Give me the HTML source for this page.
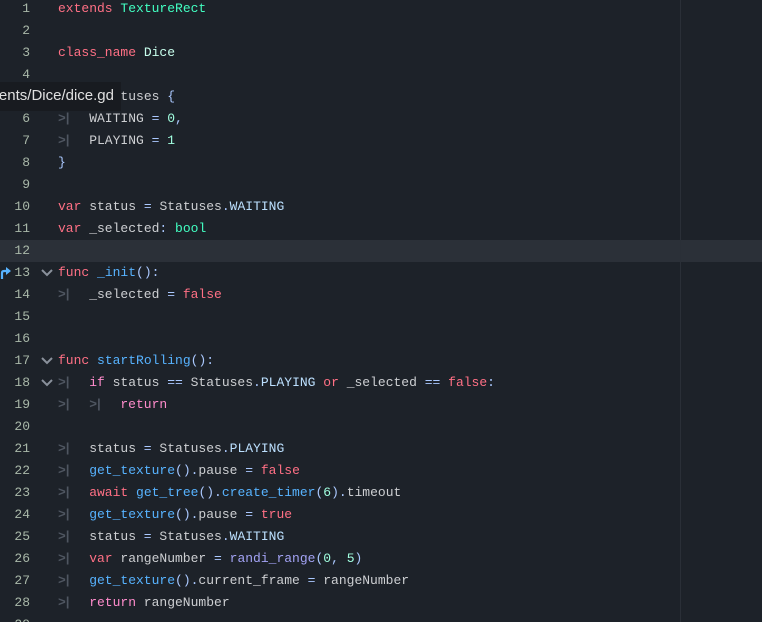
<!DOCTYPE html><html style="margin:0;height:622px;overflow:hidden"><head><style>
body{margin:0;width:762px;height:622px;background:#1d2229;overflow:hidden;position:relative;font-family:"Liberation Mono",monospace;font-size:13px}
.l{position:absolute;left:0;width:762px;height:22px;line-height:22px;white-space:pre;color:#cdcfd2}
.n{position:absolute;right:732px;color:#a9b8a9;text-align:right}
.c{position:absolute;left:58px}
.t{color:#4f5661;font-weight:bold;letter-spacing:-2px;display:inline-block;width:31.2px}
.k{color:#ff7085}.cf{color:#ff8ccc}.f{color:#57b3ff}.m{color:#bce0ff}.nu{color:#a1ffe0}.s{color:#abc9ff}.g{color:#a3a3f5}.ty{color:#42ffc2}.ut{color:#c7ffed}
.fold{position:absolute;left:41px;top:7px}
</style></head><body>
<div style="position:absolute;left:0;top:240px;width:762px;height:22px;background:#2b3038"></div>
<div style="position:absolute;left:680px;top:0;width:1px;height:622px;background:#2a2f37"></div>
<div class="l" style="top:-2px"><span class="n">1</span><span class="c"><span class="k">extends</span> <span class="ty">TextureRect</span></span></div>
<div class="l" style="top:20px"><span class="n">2</span></div>
<div class="l" style="top:42px"><span class="n">3</span><span class="c"><span class="k">class_name</span> <span class="ut">Dice</span></span></div>
<div class="l" style="top:64px"><span class="n">4</span></div>
<div class="l" style="top:86px"><span class="n">5</span><span class="c"><span class="k">enum</span> Statuses <span class="s">{</span></span></div>
<div class="l" style="top:108px"><span class="n">6</span><span class="c"><span class="t">&gt;|</span>WAITING <span class="s">=</span> <span class="nu">0</span><span class="s">,</span></span></div>
<div class="l" style="top:130px"><span class="n">7</span><span class="c"><span class="t">&gt;|</span>PLAYING <span class="s">=</span> <span class="nu">1</span></span></div>
<div class="l" style="top:152px"><span class="n">8</span><span class="c"><span class="s">}</span></span></div>
<div class="l" style="top:174px"><span class="n">9</span></div>
<div class="l" style="top:196px"><span class="n">10</span><span class="c"><span class="k">var</span> status <span class="s">=</span> Statuses<span class="s">.</span><span class="m">WAITING</span></span></div>
<div class="l" style="top:218px"><span class="n">11</span><span class="c"><span class="k">var</span> _selected<span class="s">:</span> <span class="ty">bool</span></span></div>
<div class="l" style="top:240px"><span class="n">12</span></div>
<div class="l" style="top:262px"><svg style="position:absolute;left:0;top:5px" width="11" height="12" viewBox="0 0 11 12"><path d="M2 12V6Q2 4 4 4H7" stroke="#57b3ff" stroke-width="2.2" fill="none"/><path d="M6 0L11 4L6 8Z" fill="#57b3ff"/></svg><span class="n">13</span><svg class="fold" width="12" height="8"><path d="M1 1L6 6L11 1" stroke="#8a919c" stroke-width="2" fill="none"/></svg><span class="c"><span class="k">func</span> <span class="f">_init</span><span class="s">():</span></span></div>
<div class="l" style="top:284px"><span class="n">14</span><span class="c"><span class="t">&gt;|</span>_selected <span class="s">=</span> <span class="k">false</span></span></div>
<div class="l" style="top:306px"><span class="n">15</span></div>
<div class="l" style="top:328px"><span class="n">16</span></div>
<div class="l" style="top:350px"><span class="n">17</span><svg class="fold" width="12" height="8"><path d="M1 1L6 6L11 1" stroke="#8a919c" stroke-width="2" fill="none"/></svg><span class="c"><span class="k">func</span> <span class="f">startRolling</span><span class="s">():</span></span></div>
<div class="l" style="top:372px"><span class="n">18</span><svg class="fold" width="12" height="8"><path d="M1 1L6 6L11 1" stroke="#8a919c" stroke-width="2" fill="none"/></svg><span class="c"><span class="t">&gt;|</span><span class="cf">if</span> status <span class="s">==</span> Statuses<span class="s">.</span><span class="m">PLAYING</span> <span class="k">or</span> _selected <span class="s">==</span> <span class="k">false</span><span class="s">:</span></span></div>
<div class="l" style="top:394px"><span class="n">19</span><span class="c"><span class="t">&gt;|</span><span class="t">&gt;|</span><span class="cf">return</span></span></div>
<div class="l" style="top:416px"><span class="n">20</span></div>
<div class="l" style="top:438px"><span class="n">21</span><span class="c"><span class="t">&gt;|</span>status <span class="s">=</span> Statuses<span class="s">.</span><span class="m">PLAYING</span></span></div>
<div class="l" style="top:460px"><span class="n">22</span><span class="c"><span class="t">&gt;|</span><span class="f">get_texture</span><span class="s">().</span>pause <span class="s">=</span> <span class="k">false</span></span></div>
<div class="l" style="top:482px"><span class="n">23</span><span class="c"><span class="t">&gt;|</span><span class="k">await</span> <span class="f">get_tree</span><span class="s">().</span><span class="f">create_timer</span><span class="s">(</span><span class="nu">6</span><span class="s">).</span>timeout</span></div>
<div class="l" style="top:504px"><span class="n">24</span><span class="c"><span class="t">&gt;|</span><span class="f">get_texture</span><span class="s">().</span>pause <span class="s">=</span> <span class="k">true</span></span></div>
<div class="l" style="top:526px"><span class="n">25</span><span class="c"><span class="t">&gt;|</span>status <span class="s">=</span> Statuses<span class="s">.</span><span class="m">WAITING</span></span></div>
<div class="l" style="top:548px"><span class="n">26</span><span class="c"><span class="t">&gt;|</span><span class="k">var</span> rangeNumber <span class="s">=</span> <span class="g">randi_range</span><span class="s">(</span><span class="nu">0</span><span class="s">,</span> <span class="nu">5</span><span class="s">)</span></span></div>
<div class="l" style="top:570px"><span class="n">27</span><span class="c"><span class="t">&gt;|</span><span class="f">get_texture</span><span class="s">().</span>current_frame <span class="s">=</span> rangeNumber</span></div>
<div class="l" style="top:592px"><span class="n">28</span><span class="c"><span class="t">&gt;|</span><span class="cf">return</span> rangeNumber</span></div>
<div class="l" style="top:614px;height:8px;overflow:hidden"><span class="n">29</span></div>
<div style="position:absolute;left:0;top:82px;width:121px;height:29px;background:#181b20;overflow:hidden"><div style="position:absolute;right:7px;top:5px;white-space:nowrap;font-family:'Liberation Sans',sans-serif;font-size:15px;color:#e0e0e0">res://components/Dice/dice.gd</div></div>
</body></html>
